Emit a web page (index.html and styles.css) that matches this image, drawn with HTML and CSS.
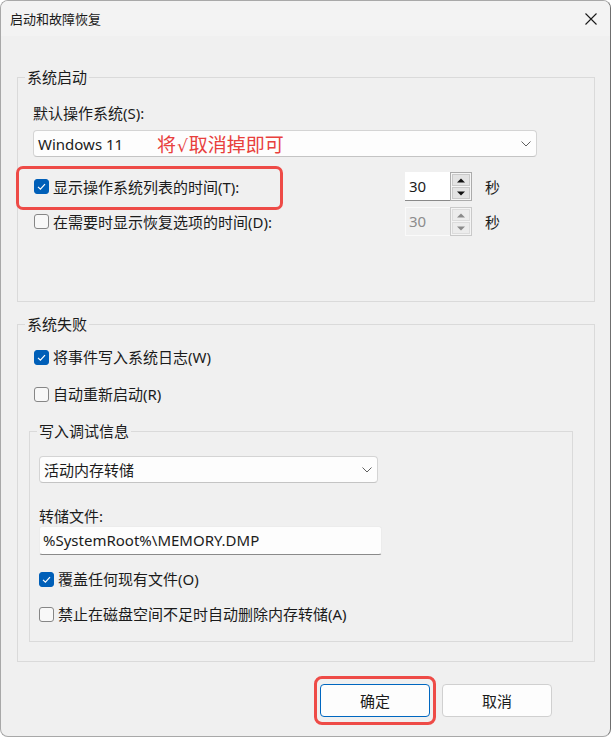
FILE: index.html
```html
<!DOCTYPE html>
<html lang="zh-CN">
<head>
<meta charset="utf-8">
<title>启动和故障恢复</title>
<link rel="stylesheet" href="styles.css">
</head>
<body>
<div class="window">
  <div class="titlebar">
    <span class="title">启动和故障恢复</span>
    <svg class="close" width="12" height="12" viewBox="0 0 12 12"><path d="M0.5 0.5L11.5 11.5M11.5 0.5L0.5 11.5" stroke="#1a1a1a" stroke-width="1.1" fill="none"/></svg>
  </div>
  <div class="content">
    <fieldset class="group">
      <legend>系统启动</legend>
      <div class="gbody g1">
        <div class="label">默认操作系统(S):</div>
        <div class="select os-select">
          <span class="val">Windows 11</span>
          <span class="note">将<span class="tick">√</span>取消掉即可</span>
          <svg class="chev" width="10" height="6" viewBox="0 0 10 6"><path d="M0.5 0.5L5 5L9.5 0.5" stroke="#5f5f5f" fill="none"/></svg>
        </div>
        <div class="timer-row marked">
          <div class="check"><span class="box on"><svg width="15" height="15" viewBox="0 0 15 15"><path d="M4 7.8L6.4 10.2L11 5.2" stroke="#fff" stroke-width="1.2" fill="none"/></svg></span>显示操作系统列表的时间(T):</div>
          <div class="spin">
            <div class="spin-input">30</div>
            <div class="spin-btns">
              <span class="spin-btn"><svg width="8" height="5" viewBox="0 0 8 5"><path d="M0 4.5L4 0.5L8 4.5Z"/></svg></span>
              <span class="spin-btn"><svg width="8" height="5" viewBox="0 0 8 5"><path d="M0 0.5L4 4.5L8 0.5Z"/></svg></span>
            </div>
          </div>
          <span class="unit">秒</span>
        </div>
        <div class="timer-row second">
          <div class="check"><span class="box"></span>在需要时显示恢复选项的时间(D):</div>
          <div class="spin disabled">
            <div class="spin-input">30</div>
            <div class="spin-btns">
              <span class="spin-btn"><svg width="8" height="5" viewBox="0 0 8 5"><path d="M0 4.5L4 0.5L8 4.5Z"/></svg></span>
              <span class="spin-btn"><svg width="8" height="5" viewBox="0 0 8 5"><path d="M0 0.5L4 4.5L8 0.5Z"/></svg></span>
            </div>
          </div>
          <span class="unit">秒</span>
        </div>
      </div>
    </fieldset>

    <fieldset class="group failure">
      <legend>系统失败</legend>
      <div class="gbody g2">
        <div class="check row-check"><span class="box on"><svg width="15" height="15" viewBox="0 0 15 15"><path d="M4 7.8L6.4 10.2L11 5.2" stroke="#fff" stroke-width="1.2" fill="none"/></svg></span>将事件写入系统日志(W)</div>
        <div class="check row-check gap-row"><span class="box"></span>自动重新启动(R)</div>
        <fieldset class="group inner">
          <legend>写入调试信息</legend>
          <div class="gbody g3">
            <div class="select dump-select">
              <span class="val">活动内存转储</span>
              <svg class="chev" width="10" height="6" viewBox="0 0 10 6"><path d="M0.5 0.5L5 5L9.5 0.5" stroke="#5f5f5f" fill="none"/></svg>
            </div>
            <div class="label file-label">转储文件:</div>
            <div class="textbox">%SystemRoot%\MEMORY.DMP</div>
            <div class="check overwrite"><span class="box on"><svg width="15" height="15" viewBox="0 0 15 15"><path d="M4 7.8L6.4 10.2L11 5.2" stroke="#fff" stroke-width="1.2" fill="none"/></svg></span>覆盖任何现有文件(O)</div>
            <div class="check disable-auto"><span class="box"></span>禁止在磁盘空间不足时自动删除内存转储(A)</div>
          </div>
        </fieldset>
      </div>
    </fieldset>

    <div class="buttons">
      <button class="btn primary">确定</button>
      <button class="btn">取消</button>
    </div>
  </div>
</div>
</body>
</html>
```
FILE: styles.css
```css
* { box-sizing: border-box; }
html, body { margin: 0; padding: 0; background: #ffffff; }
body {
  font-family: "Noto Sans", "Noto Sans CJK SC", sans-serif;
  font-size: 15px;
  line-height: 20px;
  color: #1b1b1b;
}
.window {
  width: 611px;
  height: 737px;
  background: #f0f0f0;
  border: 1px solid #a8a8a8;
  border-right-color: #6f6f6f;
  border-radius: 8px;
  overflow: hidden;
  display: flex;
  flex-direction: column;
}
.titlebar {
  height: 35px;
  flex: none;
  background: #f3f3f3;
  display: flex;
  align-items: center;
  justify-content: space-between;
  padding: 0 13px 0 9px;
}
.title { font-size: 13px; }
.close { display: block; }

.content {
  padding: 31px 15px 0 16px;
}

.group {
  margin: 0;
  padding: 0;
  border: 1px solid #dadada;
  min-inline-size: 0;
}
.group legend {
  margin-left: 7px;
  padding: 0 2px;
  line-height: 20px;
}
.gbody.g1 { padding: 16px 15px 65px 15px; }
.failure { margin-top: 12px; }
.gbody.g2 { padding: 13px 21px 19px 11px; }
.inner { margin-top: 17px; }
.gbody.g3 { padding: 15px 9px 17px 9px; }

.label { height: 20px; }

.select {
  position: relative;
  height: 27px;
  background: #fdfdfd;
  border: 1px solid #d4d4d4;
  border-bottom-color: #c4c4c4;
  border-radius: 4px;
  display: flex;
  align-items: center;
  justify-content: space-between;
  padding: 0 5px 0 4px;
}
.os-select { margin-top: 7px; width: 504px; }
.dump-select { width: 339px; }
.chev { display: block; }
.note {
  position: absolute;
  left: 123px;
  top: 1px;
  font-family: "Noto Sans CJK SC", sans-serif;
  font-size: 19px;
  line-height: 24px;
  color: #e8403c;
}
.note .tick {
  font-family: "DejaVu Sans", sans-serif;
  font-size: 17px;
  margin: 0 1px;
}

.check {
  display: flex;
  align-items: center;
  height: 20px;
  white-space: nowrap;
}
.box {
  width: 15px;
  height: 15px;
  flex: none;
  border: 1px solid #868686;
  border-radius: 3px;
  background: #f8f8f8;
  margin-right: 4px;
  display: flex;
}
.box.on {
  background: #005fb8;
  border-color: #005fb8;
}
.box svg { display: block; margin: -1px; }

.timer-row {
  position: relative;
  display: flex;
  align-items: center;
  height: 29px;
  margin-top: 15px;
}
.timer-row.second { margin-top: 6px; }
.timer-row .check { width: 372px; padding-left: 1px; }
.timer-row.marked::after {
  content: "";
  position: absolute;
  left: -17px;
  top: -6px;
  width: 261px;
  height: 38px;
  border: 3px solid #ee4b47;
  border-radius: 7px;
}

.spin { display: flex; height: 29px; }
.spin-input {
  width: 45px;
  height: 29px;
  background: #ffffff;
  border-bottom: 1px solid #8a8a8a;
  padding: 4px 0 0 4px;
  line-height: 20px;
}
.spin-btns {
  width: 22px;
  height: 29px;
  border: 1px solid #ababab;
  background: #f6f6f6;
  padding: 1px;
  display: flex;
  flex-direction: column;
  gap: 1px;
}
.spin-btn {
  flex: 1;
  background: #e3e3e3;
  border: 1px solid #c9c9c9;
  display: flex;
  align-items: center;
  justify-content: center;
}
.spin-btn svg { display: block; fill: #111111; }
.spin.disabled .spin-input {
  background: #f0f0f0;
  border: 1px solid #fafafa;
  border-right: none;
  color: #8c8c8c;
  padding: 3px 0 0 3px;
}
.spin.disabled .spin-btns { border-color: #c9c9c9; background: #f4f4f4; }
.spin.disabled .spin-btn { background: #ececec; border-color: #dcdcdc; }
.spin.disabled .spin-btn svg { fill: #8a8a8a; }
.unit { margin-left: 13px; }

.row-check { margin-left: 5px; }
.gap-row { margin-top: 17px; }

.file-label { margin-top: 23px; }
.textbox {
  width: 343px;
  height: 29px;
  background: #fdfdfd;
  border: 1px solid #ececec;
  border-bottom-color: #8a8a8a;
  border-radius: 3px;
  padding: 3px 0 0 3px;
}
.overwrite { margin-top: 14px; }
.disable-auto { margin-top: 15px; }

.buttons {
  display: flex;
  justify-content: flex-end;
  gap: 12px;
  margin-top: 22px;
  padding-right: 43px;
}
.btn {
  position: relative;
  width: 110px;
  height: 33px;
  font: inherit;
  font-family: "Noto Sans CJK SC", sans-serif;
  color: #1b1b1b;
  background: #fdfdfd;
  border: 1px solid #d0d0d0;
  border-radius: 4px;
  padding: 0;
}
.btn.primary { border-color: #0067c0; }
.btn.primary::after {
  content: "";
  position: absolute;
  left: -7px;
  top: -9px;
  right: -7px;
  bottom: -9px;
  border: 3px solid #ee4b47;
  border-radius: 8px;
}
```
